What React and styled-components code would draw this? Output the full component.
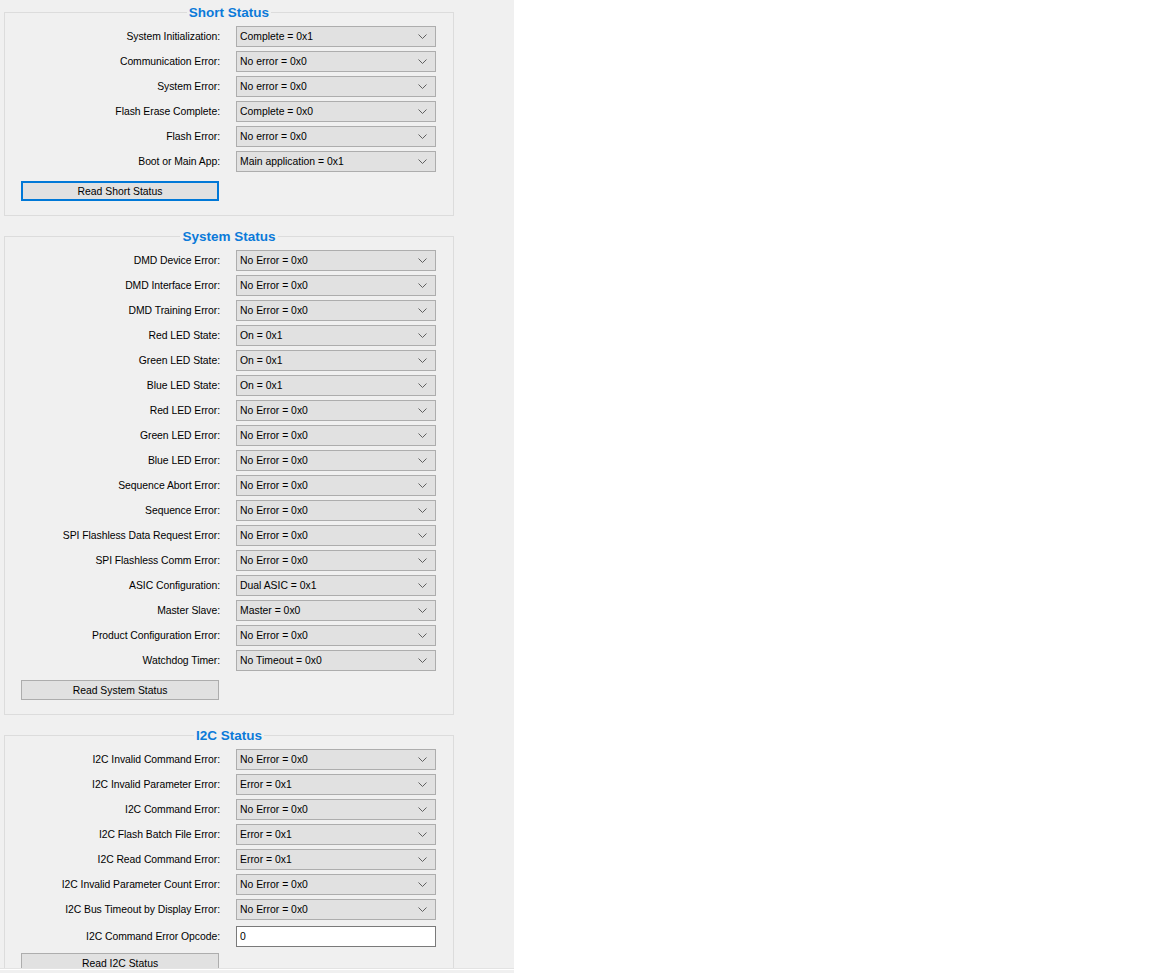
import React, { useState } from 'react';
import styled, { createGlobalStyle } from 'styled-components';

const GlobalStyle = createGlobalStyle`
  html, body {
    margin: 0;
    padding: 0;
    background: #ffffff;
  }
  body {
    font-family: "Liberation Sans", Arial, sans-serif;
    font-size: 11px;
    color: #000;
  }
`;

const Window = styled.div`
  width: 514px;
  height: 973px;
  background: #f0f0f0;
  display: flex;
  flex-direction: column;
`;

const Scroller = styled.div`
  height: 969px;
  overflow: hidden;
  padding: 4px 0 0 4px;
  box-sizing: border-box;
  border-bottom: 1px solid #e3e3e3;
`;

const Splitter = styled.div`
  height: 3px;
  border-top: 1px solid #ffffff;
  background: #f0f0f0;
`;

const Group = styled.fieldset`
  width: 450px;
  box-sizing: border-box;
  margin: 0 0 12px 0;
  padding: 6px 0 14px 0;
  border: 1px solid #dcdcdc;
  min-inline-size: 0;
`;

const Legend = styled.legend`
  margin: 0 auto;
  padding: 1px 2px 0 2px;
  font-family: "Liberation Sans", Arial, sans-serif;
  font-weight: bold;
  font-size: 13.5px;
  line-height: 15px;
  color: #0b7ad9;
`;

const Rows = styled.div`
  display: flex;
  flex-direction: column;
  gap: 4px;
`;

const Row = styled.div`
  display: flex;
  align-items: center;
  gap: 16px;
  height: 21px;
  margin-top: ${(p) => (p.$extra ? `${p.$extra}px` : '0')};
`;

const Label = styled.span`
  width: 215px;
  text-align: right;
  white-space: nowrap;
  font-size: 10.4px;
  letter-spacing: -0.05px;
`;

const Combo = styled.div`
  width: 200px;
  height: 21px;
  box-sizing: border-box;
  border: 1px solid #adadad;
  background: #e1e1e1;
  display: flex;
  align-items: center;
  justify-content: space-between;
  padding: 0 8px 0 3px;
  font-size: 10.4px;
`;

const TextBox = styled.div`
  width: 200px;
  height: 21px;
  box-sizing: border-box;
  border: 1px solid #7a7a7a;
  background: #ffffff;
  display: flex;
  align-items: center;
  padding: 0 3px;
  font-size: 10.4px;
`;

const Button = styled.button`
  display: block;
  margin: ${(p) => p.$gap}px 0 0 16px;
  width: 198px;
  height: 20px;
  box-sizing: border-box;
  padding: 0;
  background: #e1e1e1;
  border: ${(p) => (p.$focused ? '2px solid #0078d7' : '1px solid #adadad')};
  font-family: "Liberation Sans", Arial, sans-serif;
  font-size: 10.4px;
  color: #000;
  cursor: pointer;
`;

const Chevron = () => (
  <svg width="9" height="5" viewBox="0 0 9 5">
    <path d="M0.5 0.5 L4.5 4.5 L8.5 0.5" fill="none" stroke="#606060" strokeWidth="1" />
  </svg>
);

const shortStatus = [
  ['System Initialization:', 'Complete = 0x1'],
  ['Communication Error:', 'No error = 0x0'],
  ['System Error:', 'No error = 0x0'],
  ['Flash Erase Complete:', 'Complete = 0x0'],
  ['Flash Error:', 'No error = 0x0'],
  ['Boot or Main App:', 'Main application = 0x1'],
];

const systemStatus = [
  ['DMD Device Error:', 'No Error = 0x0'],
  ['DMD Interface Error:', 'No Error = 0x0'],
  ['DMD Training Error:', 'No Error = 0x0'],
  ['Red LED State:', 'On = 0x1'],
  ['Green LED State:', 'On = 0x1'],
  ['Blue LED State:', 'On = 0x1'],
  ['Red LED Error:', 'No Error = 0x0'],
  ['Green LED Error:', 'No Error = 0x0'],
  ['Blue LED Error:', 'No Error = 0x0'],
  ['Sequence Abort Error:', 'No Error = 0x0'],
  ['Sequence Error:', 'No Error = 0x0'],
  ['SPI Flashless Data Request Error:', 'No Error = 0x0'],
  ['SPI Flashless Comm Error:', 'No Error = 0x0'],
  ['ASIC Configuration:', 'Dual ASIC = 0x1'],
  ['Master Slave:', 'Master = 0x0'],
  ['Product Configuration Error:', 'No Error = 0x0'],
  ['Watchdog Timer:', 'No Timeout = 0x0'],
];

const i2cStatus = [
  ['I2C Invalid Command Error:', 'No Error = 0x0'],
  ['I2C Invalid Parameter Error:', 'Error = 0x1'],
  ['I2C Command Error:', 'No Error = 0x0'],
  ['I2C Flash Batch File Error:', 'Error = 0x1'],
  ['I2C Read Command Error:', 'Error = 0x1'],
  ['I2C Invalid Parameter Count Error:', 'No Error = 0x0'],
  ['I2C Bus Timeout by Display Error:', 'No Error = 0x0'],
];

function StatusGroup({ title, rows, button, focused, onRead, gap = 9, children }) {
  return (
    <Group>
      <Legend>{title}</Legend>
      <Rows>
        {rows.map(([label, value]) => (
          <Row key={label}>
            <Label>{label}</Label>
            <Combo>
              <span>{value}</span>
              <Chevron />
            </Combo>
          </Row>
        ))}
        {children}
      </Rows>
      <Button $focused={focused} $gap={gap} onClick={onRead}>{button}</Button>
    </Group>
  );
}

export default function App() {
  const [focused, setFocused] = useState('short');
  return (
    <>
      <GlobalStyle />
      <Window>
        <Scroller>
          <StatusGroup
            title="Short Status"
            rows={shortStatus}
            button="Read Short Status"
            focused={focused === 'short'}
            onRead={() => setFocused('short')}
          />
          <StatusGroup
            title="System Status"
            rows={systemStatus}
            button="Read System Status"
            focused={focused === 'system'}
            onRead={() => setFocused('system')}
          />
          <StatusGroup
            title="I2C Status"
            rows={i2cStatus}
            button="Read I2C Status"
            gap={6}
            focused={focused === 'i2c'}
            onRead={() => setFocused('i2c')}
          >
            <Row $extra={2}>
              <Label>I2C Command Error Opcode:</Label>
              <TextBox>0</TextBox>
            </Row>
          </StatusGroup>
        </Scroller>
        <Splitter />
      </Window>
    </>
  );
}
